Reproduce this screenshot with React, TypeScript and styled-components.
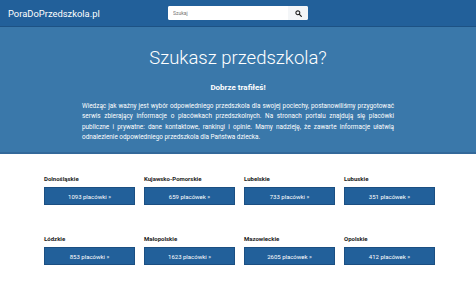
import React from 'react';
import styled, { createGlobalStyle } from 'styled-components';

const GlobalStyle = createGlobalStyle`
  html, body {
    margin: 0;
    padding: 0;
    background: #ffffff;
    font-family: Roboto, "Liberation Sans", sans-serif;
  }
  * { box-sizing: border-box; }
`;

const regions = [
  { name: 'Dolnośląskie', count: '1093 placówki' },
  { name: 'Kujawsko-Pomorskie', count: '659 placówek' },
  { name: 'Lubelskie', count: '733 placówki' },
  { name: 'Lubuskie', count: '351 placówek' },
  { name: 'Łódzkie', count: '853 placówki' },
  { name: 'Małopolskie', count: '1623 placówki' },
  { name: 'Mazowieckie', count: '2605 placówek' },
  { name: 'Opolskie', count: '412 placówek' },
];

const Navbar = styled.header`
  height: 27px;
  background: #22609a;
  border-bottom: 1px solid #1d5284;
  display: flex;
  align-items: center;
  padding-left: 8px;
`;

const Brand = styled.a`
  color: #ffffff;
  font-size: 9.4px;
  text-decoration: none;
  width: 160px;
`;

const SearchBox = styled.form`
  display: flex;
  height: 14px;
  width: 140px;
  background: #ffffff;
  border-radius: 2px;
  overflow: hidden;
`;

const SearchInput = styled.input`
  flex: 1;
  border: none;
  outline: none;
  font-size: 5px;
  padding: 0 5px;
  color: #999;
  font-family: inherit;
  min-width: 0;
`;

const SearchButton = styled.button`
  width: 20px;
  border: none;
  background: #f4f6f8;
  display: flex;
  align-items: center;
  justify-content: center;
  padding: 0;
`;

const Hero = styled.section`
  background: #3a78aa;
  border-bottom: 2px solid #33699a;
  color: #ffffff;
  text-align: center;
  padding: 19px 0 10px;
`;

const HeroTitle = styled.h1`
  margin: 0;
  font-weight: 300;
  font-size: 18.5px;
  line-height: 24px;
`;

const HeroLead = styled.p`
  margin: 13px 0 8px;
  font-weight: 700;
  font-size: 8px;
  line-height: 10px;
`;

const HeroText = styled.p`
  margin: 0 auto;
  width: 312px;
  text-align: justify;
  font-size: 6.4px;
  line-height: 10.3px;
`;

const Grid = styled.div`
  display: grid;
  grid-template-columns: repeat(4, 91px);
  column-gap: 9px;
  row-gap: 30px;
  padding: 21px 0 0 44px;
`;

const Region = styled.div`
  display: flex;
  flex-direction: column;
`;

const RegionName = styled.div`
  font-size: 6px;
  line-height: 7px;
  font-weight: 700;
  color: #222;
  margin-bottom: 5px;
`;

const RegionButton = styled.a`
  height: 18px;
  background: #22609a;
  border: 1px solid #1b4f82;
  color: #ffffff;
  font-size: 6px;
  display: flex;
  align-items: center;
  justify-content: center;
  text-decoration: none;
`;

export default function App() {
  return (
    <>
      <GlobalStyle />
      <Navbar>
        <Brand>PoraDoPrzedszkola.pl</Brand>
        <SearchBox>
          <SearchInput placeholder="Szukaj" />
          <SearchButton type="button">
            <svg width="7" height="7" viewBox="0 0 16 16">
              <circle cx="6.5" cy="6.5" r="4.5" fill="none" stroke="#222" strokeWidth="2.4" />
              <line x1="10" y1="10" x2="14.5" y2="14.5" stroke="#222" strokeWidth="2.8" strokeLinecap="round" />
            </svg>
          </SearchButton>
        </SearchBox>
      </Navbar>
      <Hero>
        <HeroTitle>Szukasz przedszkola?</HeroTitle>
        <HeroLead>Dobrze trafiłeś!</HeroLead>
        <HeroText>
          Wiedząc jak ważny jest wybór odpowiedniego przedszkola dla swojej pociechy, postanowiliśmy przygotować
          serwis zbierający informacje o placówkach przedszkolnych. Na stronach portalu znajdują się placówki
          publiczne i prywatne: dane kontaktowe, rankingi i opinie. Mamy nadzieję, że zawarte informacje ułatwią
          odnalezienie odpowiedniego przedszkola dla Państwa dziecka.
        </HeroText>
      </Hero>
      <Grid>
        {regions.map(r => (
          <Region key={r.name}>
            <RegionName>{r.name}</RegionName>
            <RegionButton>{r.count} »</RegionButton>
          </Region>
        ))}
      </Grid>
    </>
  );
}
